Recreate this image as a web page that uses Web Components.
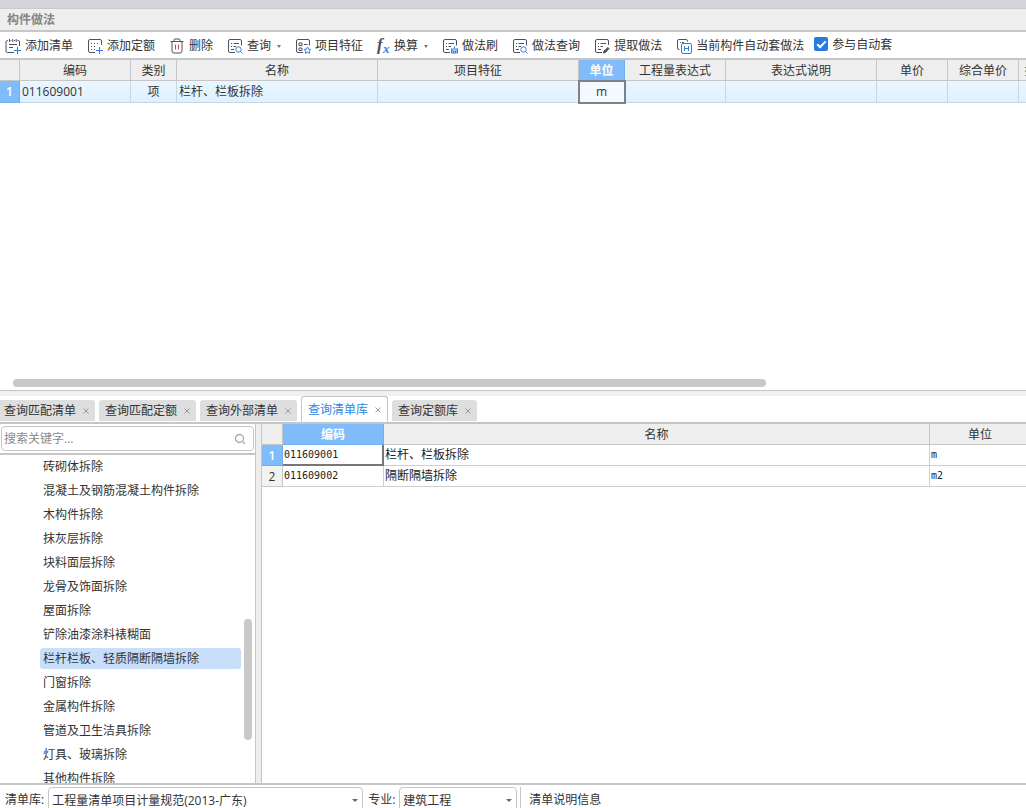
<!DOCTYPE html>
<html lang="zh-CN">
<head>
<meta charset="utf-8">
<title>构件做法</title>
<style>
  html, body { margin: 0; height: 100%; }
  body {
    overflow: hidden;
    font: 12px/20px "Open Sans", "Noto Sans CJK SC", sans-serif;
    color: #333;
    background: #fff;
    --line: #c6c6c6;
    --panel: #eee;
    --blue: #80bcfa;
  }
</style>
</head>
<body>
<method-app></method-app>

<template id="method-app">
  <style>
    :host { display: flex; flex-direction: column; height: 100vh; overflow: hidden; }
    .strip { flex: none; height: 8px; background: #d3d4da; border-bottom: 1px solid #c8c9ce; }
    h1 { flex: none; margin: 0; padding: 0 7px; height: 21px; line-height: 22px; font-size: 12px; font-weight: 700; color: #858585; background: var(--panel); border-bottom: 2px solid var(--line); }
    .upper { flex: 330 1 0; min-height: 0; position: relative; overflow: hidden; }
    .thumb { position: absolute; left: 13px; right: 260px; bottom: 3px; height: 8px; border-radius: 4px; background: #c9c9c9; }
    .splitter { flex: none; height: 5px; background: #f0f0f0; border-top: 1px solid var(--line); }
    .lower { flex: 359 1 0; min-height: 0; display: grid; grid-template-columns: 255px 7px 1fr; }
    .gutter { background: var(--panel); border: solid var(--line); border-width: 0 1px; }
    .lower > * { min-width: 0; min-height: 0; overflow: hidden; }
  </style>
  <div class="strip"></div>
  <h1>构件做法</h1>
  <tool-bar></tool-bar>
  <div class="upper"><data-grid id="bills"></data-grid><div class="thumb"></div></div>
  <div class="splitter"></div>
  <query-tabs></query-tabs>
  <div class="lower">
    <category-tree></category-tree>
    <div class="gutter"></div>
    <data-grid id="library" class="song"></data-grid>
  </div>
  <status-bar></status-bar>
</template>

<template id="tool-bar">
  <style>
    :host { flex: none; display: flex; gap: 10px; height: 26px; padding: 0 5px; border-bottom: 2px solid var(--line); white-space: nowrap; }
    nav { display: flex; gap: 14px; padding-top: 4px; }
    label { display: flex; align-items: center; gap: 4px; height: 14px; padding-top: 5px; }
    label span { padding-top: 2px; }
    input { appearance: none; margin: 0; width: 14px; height: 14px; border-radius: 2px; background: #2a7ae0; display: grid; place-items: center; }
    input:checked::before { content: ""; width: 7px; height: 3px; border: solid #fff; border-width: 0 0 2px 2px; transform: translateY(-1px) rotate(-45deg); }
  </style>
  <nav>
    <tool-button icon="list">添加清单</tool-button>
    <tool-button icon="quota">添加定额</tool-button>
    <tool-button icon="trash">删除</tool-button>
    <tool-button icon="search" menu>查询</tool-button>
    <tool-button icon="feature">项目特征</tool-button>
    <tool-button icon="formula" menu>换算</tool-button>
    <tool-button icon="brush">做法刷</tool-button>
    <tool-button icon="search">做法查询</tool-button>
    <tool-button icon="extract">提取做法</tool-button>
    <tool-button icon="auto">当前构件自动套做法</tool-button>
  </nav>
  <label><input type="checkbox" checked><span>参与自动套</span></label>
</template>

<template id="tool-button">
  <style>
    :host { display: block; }
    button { all: unset; display: flex; align-items: center; gap: 4px; height: 20px; line-height: 22px; cursor: pointer; }
    svg { display: block; width: 16px; height: 16px; fill: none; stroke: #4b5262; overflow: visible; }
    .narrow { width: 13px; }
    .b { stroke: #2f7de0; }
    i { display: none; margin-left: 2px; border: solid transparent; border-width: 3px 2px 0; border-top-color: #777; }
    :host([menu]) i { display: block; }
  </style>
  <button type="button"><svg viewBox="0 0 16 16" aria-hidden="true"></svg><slot></slot><i></i></button>
</template>

<template id="query-tabs">
  <style>
    :host { flex: none; display: flex; align-items: flex-end; gap: 4px; height: 26px; margin-left: -2px; border-bottom: 2px solid var(--line); white-space: nowrap; }
    .tab { display: flex; align-items: center; gap: 7px; height: 21px; margin-bottom: 1px; padding: 0 6px; background: #dedede; border-radius: 3px 3px 0 0; }
    .tab.on { height: 25px; margin-bottom: 0; background: #fff; border: solid var(--line); border-width: 1px 1px 0; color: #2f86e4; }
    button { all: unset; cursor: pointer; }
    svg { display: block; width: 6px; height: 6px; stroke: #999; }
  </style>
</template>

<template id="category-tree">
  <style>
    :host { display: flex; flex-direction: column; }
    .search { flex: none; display: flex; align-items: center; margin: 2px 1px; height: 23px; padding: 0 7px 0 2px; border: 1px solid var(--line); border-radius: 4px; }
    input { flex: 1; min-width: 0; border: 0; outline: 0; padding: 0; font: inherit; color: inherit; background: none; }
    input::placeholder { color: #8a8a8a; }
    svg { width: 12px; height: 12px; fill: none; stroke: #aaa; stroke-width: 1.3; }
    .list { flex: 1; min-height: 0; position: relative; overflow: hidden; border-top: 2px solid var(--line); }
    ul { list-style: none; display: flow-root; margin: 0; padding: 0 14px 0 40px; }
    li { height: 21px; line-height: 22px; margin-top: 1px; padding: 0 3px; border-radius: 3px; white-space: nowrap; }
    li + li { margin-top: 3px; }
    li.on { background: #c9dff9; }
    .thumb { position: absolute; right: 3px; top: 50%; width: 8px; height: 37%; border-radius: 4px; background: #c9c9c9; }
  </style>
  <div class="search">
    <input type="text" placeholder="搜索关键字..." aria-label="搜索关键字">
    <svg viewBox="0 0 12 12" aria-hidden="true"><circle cx="5.5" cy="5.5" r="4"/><path d="M8.5 8.5 11 11"/></svg>
  </div>
  <div class="list"><ul></ul><div class="thumb"></div></div>
</template>

<template id="data-grid">
  <style>
    :host { display: block; --row: 22px; }
    :host(.song) { --row: 21px; }
    table { table-layout: fixed; border-collapse: separate; border-spacing: 0; width: 0; }
    th, td { box-sizing: border-box; padding: 0 2px; overflow: hidden; white-space: nowrap; font-weight: 400; text-align: left; line-height: 20px; border: solid var(--line); border-width: 0 1px 1px 0; }
    thead th { height: 21px; line-height: 18px; padding-top: 2px; background: var(--panel); text-align: center; }
    tbody th, tbody td { height: var(--row); }
    tbody th { padding: 0; text-align: center; background: #f2f2f2; }
    td { border-color: #cfcfcf; }
    td.c { text-align: center; }
    tr.on td { background: linear-gradient(#eaf6ff, #dff0ff); border-color: #c3d6e4; }
    thead th.on, tbody tr.cur th { background: var(--blue); color: #fff; font-weight: 600; border-color: #6fb0f3; }
    tr.on td.focus { background: #f2f9ff; outline: 2px solid #7c8288; outline-offset: -1px; position: relative; }
    :host(.song) tbody th { line-height: 18px; padding-top: 2px; }
    :host(.song) td { line-height: 20px; padding: 0 1px; font-family: "DejaVu Sans Mono", "Noto Sans CJK SC", monospace; color: #222; }
    :host(.song) td.n { font-size: 10px; }
    :host(.song) td.focus { border: solid #777; border-width: 0 2px 2px 0; line-height: 19px; }
  </style>
  <table><colgroup></colgroup><thead><tr></tr></thead><tbody></tbody></table>
</template>

<template id="status-bar">
  <style>
    :host { flex: none; display: flex; height: 21px; padding: 2px 5px 0; border-top: 2px solid var(--line); overflow: hidden; line-height: 26px; white-space: nowrap; }
    label { display: flex; gap: 4px; margin-right: 5px; }
    .pick { position: relative; display: block; }
    .wide { width: 315px; }
    .mid { width: 118px; }
    select { appearance: none; box-sizing: border-box; width: 100%; height: 26px; padding: 0 3px; font: inherit; color: inherit; background: #fff; border: 1px solid var(--line); border-radius: 4px; display: block; }
    .pick::after { content: ""; position: absolute; right: 5px; top: 12px; border: solid transparent; border-width: 3px 3px 0; border-top-color: #666; }
    .info { border-left: 1px solid var(--line); padding-left: 8px; margin-left: -2px; }
  </style>
  <label><span>清单库:</span><span class="pick wide"><select><option>工程量清单项目计量规范(2013-广东)</option></select></span></label>
  <label><span>专业:</span><span class="pick mid"><select><option>建筑工程</option></select></span></label>
  <span class="info">清单说明信息</span>
</template>

<script>
  const sheet = '<path d="M8 14.5H3A1.5 1.5 0 0 1 1.500 13V3A1.500 1.500 0 0 1 3 1.500H13A1.500 1.500 0 0 1 14.500 3V7.500"/>';
  const lines = '<path d="M4 5.500H5M6.500 5.500H12M4 8.500H5M6.500 8.500H9M4 11.500H7"/>';
  const ICONS = {
    list: '<path d="M9 14.500H2.500A1.500 1.500 0 0 1 1 13V4A1.500 1.500 0 0 1 2.500 2.500H3M5.500 2.500H6.500M9 2.500H10M12.500 2.500H13A1.500 1.500 0 0 1 14.500 4V8M4.500 1V4M7.800 1V4M11.200 1V4M4 6.500H12M4 9.500H8"/><path class="b" d="M12.500 9V16M9 12.500H16"/>',
    quota: '<path d="M8 14.500H3A1.500 1.500 0 0 1 1.500 13V3A1.500 1.500 0 0 1 3 1.500H13A1.500 1.500 0 0 1 14.500 3V7"/><path stroke-dasharray="1 2" d="M4 5.500H12M4 8.500H10M4 11.500H8"/><path class="b" d="M12.500 9V16M9 12.500H16"/>',
    trash: '<path d="M1.500 3.500H14.500M5 3V2A1 1 0 0 1 6 1H10A1 1 0 0 1 11 2V3M3 3.500V13A2 2 0 0 0 5 15H11A2 2 0 0 0 13 13V3.500"/><path stroke="#d04545" d="M6.500 6.500V11.500M9.500 6.500V11.500"/>',
    search: sheet + lines + '<g class="b"><circle cx="11.500" cy="11.500" r="2.700"/><path d="M13.500 13.500 15.500 15.500"/></g>',
    feature: sheet + '<path d="M4 5H7V7.500H4ZM9 6.500H12.500M4 10H7V12.500H4Z"/><path class="b" d="M12.500 9 13.600 11.200 15.900 11.500 14.200 13.100 14.600 15.400 12.500 14.300 10.400 15.400 10.800 13.100 9.100 11.500 11.400 11.200Z"/>',
    formula: '<text x="0" y="12" font-family="Liberation Serif, serif" font-style="italic" font-weight="700" font-size="17" fill="#4b5262" stroke="none">f</text><text x="6" y="15" font-family="Liberation Serif, serif" font-style="italic" font-weight="700" font-size="13" fill="#2f7de0" stroke="none">x</text>',
    brush: sheet + lines + '<path class="b" d="M12.500 8.500V10.500M9 11H16M9.500 11V15H15.500V11M9.500 13H15.500M11.500 13V15M13.500 13V15"/>',
    extract: '<path d="M8 14.500H3A1.500 1.500 0 0 1 1.500 13V3A1.500 1.500 0 0 1 3 1.500H13A1.500 1.500 0 0 1 14.500 3V7"/>' + lines + '<path fill="#4b5262" d="M9.500 15 10 13 14 9.500 15 10.500 11.500 14.500Z"/>',
    auto: '<path d="M3.500 11.500H3A1.500 1.500 0 0 1 1.500 10V3A1.500 1.500 0 0 1 3 1.500H10A1.500 1.500 0 0 1 11.500 3V3.500M4 4.500H5M6 4.500H8"/><g class="b"><rect x="5.500" y="5.500" width="10" height="10" rx="1.500"/><path d="M8.500 8V13M12.500 8V13M8.500 10.500H12.500"/></g>'
  };

  function define(name, setup) {
    customElements.define(name, class extends HTMLElement {
      constructor() {
        super();
        this.attachShadow({ mode: 'open' }).append(document.getElementById(name).content.cloneNode(true));
      }
      connectedCallback() { if (setup) setup(this, this.shadowRoot); }
    });
  }

  define('tool-button', (host, root) => {
    const svg = root.querySelector('svg'), icon = host.getAttribute('icon');
    svg.innerHTML = ICONS[icon];
    if (icon === 'formula') { svg.classList.add('narrow'); svg.setAttribute('viewBox', '0 0 13 16'); }
  });
  define('tool-bar');

  define('query-tabs', (host, root) => {
    ['查询匹配清单', '查询匹配定额', '查询外部清单', '查询清单库', '查询定额库'].forEach((name, i) => {
      root.append(document.createRange().createContextualFragment(
        `<div class="tab${i === 3 ? ' on' : ''}"><button type="button">${name}</button><button type="button" aria-label="关闭"><svg viewBox="0 0 6 6"><path d="M0.500 0.500 5.500 5.500M5.500 0.500 0.500 5.500"/></svg></button></div>`));
    });
  });

  define('category-tree', (host, root) => {
    root.querySelector('ul').innerHTML = ['砖砌体拆除', '混凝土及钢筋混凝土构件拆除', '木构件拆除', '抹灰层拆除', '块料面层拆除', '龙骨及饰面拆除', '屋面拆除', '铲除油漆涂料裱糊面', '栏杆栏板、轻质隔断隔墙拆除', '门窗拆除', '金属构件拆除', '管道及卫生洁具拆除', '灯具、玻璃拆除', '其他构件拆除']
      .map((t, i) => `<li${i === 8 ? ' class="on"' : ''}>${t}</li>`).join('');
  });

  const GRIDS = {
    bills: {
      widths: [20, 111, 46, 201, 201, 46, 101, 151, 71, 71, 60],
      heads: ['', '编码', '类别', '名称', '项目特征', '单位', '工程量表达式', '表达式说明', '单价', '综合单价', '措施项目'],
      rows: [['011609001', '项', '栏杆、栏板拆除', '', 'm', '', '', '', '', '']],
      tint: true, centred: [1, 4], headOn: 5, focus: 4, numeric: [0]
    },
    library: {
      widths: [21, 101, 546, 101],
      heads: ['', '编码', '名称', '单位'],
      rows: [['011609001', '栏杆、栏板拆除', 'm'], ['011609002', '隔断隔墙拆除', 'm2']],
      tint: false, centred: [], headOn: 1, focus: 0, numeric: [0, 2]
    }
  };

  define('data-grid', (host, root) => {
    const g = GRIDS[host.id];
    root.querySelector('colgroup').innerHTML = g.widths.map(w => `<col style="width:${w}px">`).join('');
    root.querySelector('thead tr').innerHTML = g.heads.map((h, i) => h ? `<th scope="col"${i === g.headOn ? ' class="on"' : ''}>${h}</th>` : '<th></th>').join('');
    root.querySelector('tbody').innerHTML = g.rows.map((r, y) =>
      `<tr class="${y === 0 ? 'cur' + (g.tint ? ' on' : '') : ''}"><th scope="row">${y + 1}</th>` + r.map((c, x) => {
        const cls = [g.centred.includes(x) && 'c', g.numeric.includes(x) && 'n', y === 0 && x === g.focus && 'focus'].filter(Boolean).join(' ');
        return `<td class="${cls}">${c}</td>`;
      }).join('') + '</tr>').join('');
  });

  define('status-bar');
  define('method-app');
</script>
</body>
</html>
